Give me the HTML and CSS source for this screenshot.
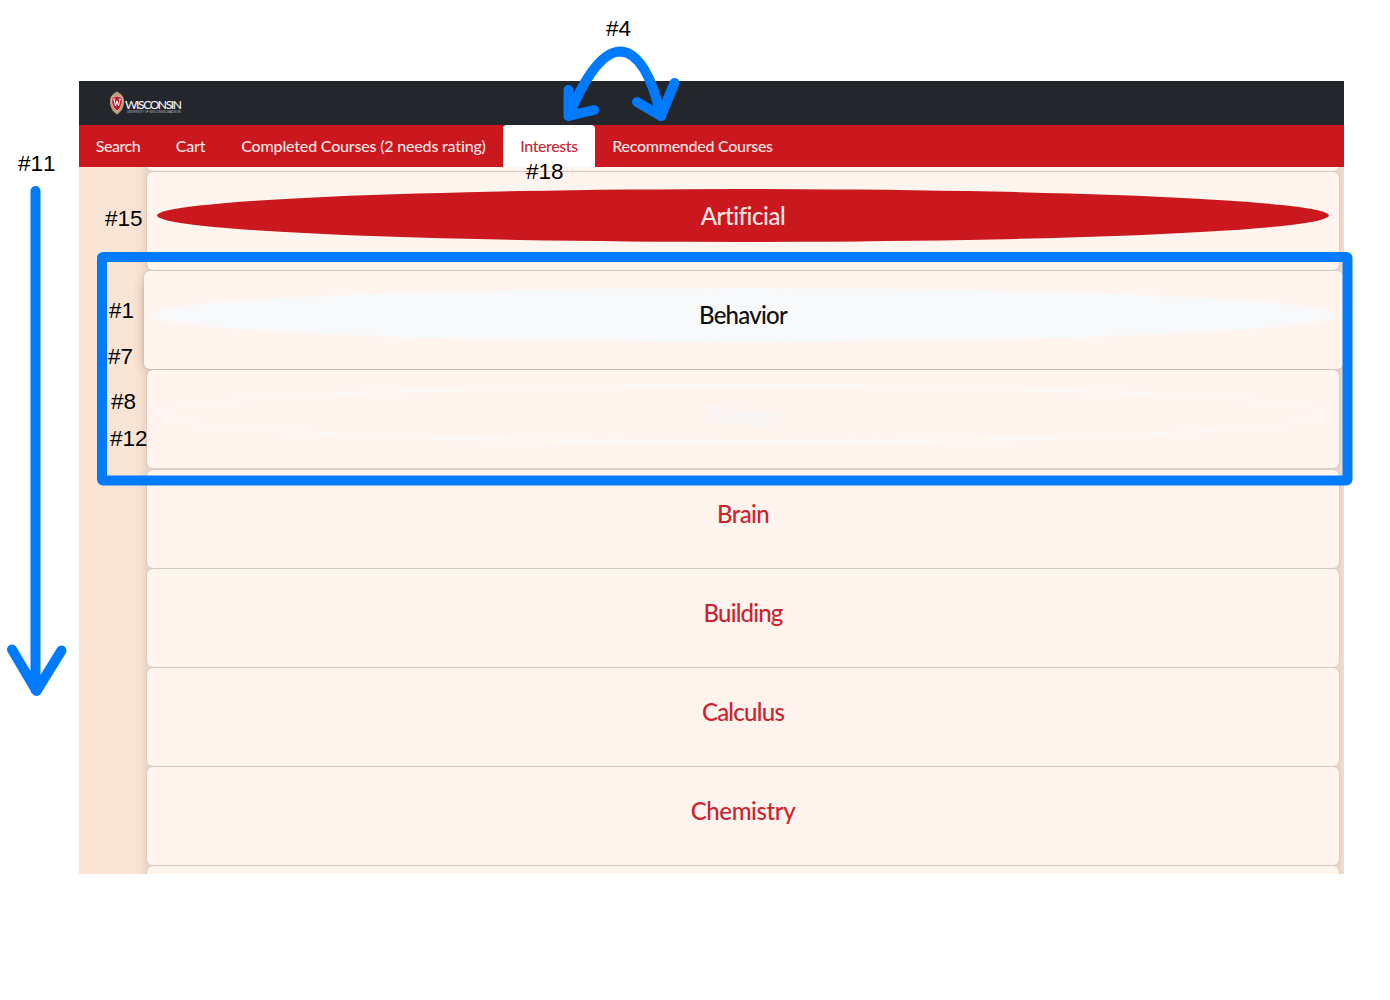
FILE: index.html
```html
<!DOCTYPE html>
<html lang="en">
<head>
<meta charset="utf-8">
<title>Interests</title>
<link rel="stylesheet" href="styles.css">
</head>
<body>
<main class="screen">
  <header class="topbar">
    <svg class="crest" viewBox="0 0 16 24" width="16" height="24">
      <path d="M8 .5 C10 2 15 4 15 10 C15 17 12 21 8 23.5 C4 21 1 17 1 10 C1 4 6 2 8 .5Z" fill="#bd9b79"/>
      <path d="M3 6.500 Q8 3.500 13 6.500 L13.200 12 Q12 17.500 8 20 Q4 17.500 2.800 12Z" fill="#c81c2d" stroke="#ead8ca" stroke-width=".7"/>
      <path d="M4 8.200H6.200M9.800 8.200H12M5 8.500L6.500 15L8 9.800L9.500 15L11 8.500" fill="none" stroke="#fff" stroke-width="1"/>
    </svg>
    <div class="brand">
      <span class="brand-name">WISCONSIN</span>
      <span class="brand-sub">UNIVERSITY OF WISCONSIN–MADISON</span>
    </div>
  </header>
  <nav class="tabs">
    <a class="tab tab-search">Search</a>
    <a class="tab tab-cart">Cart</a>
    <a class="tab tab-completed">Completed Courses (2 needs rating)</a>
    <a class="tab tab-interests">Interests</a>
    <a class="tab tab-recommended">Recommended Courses</a>
  </nav>
  <section class="list">
    <div class="card"></div>
    <div class="card"><div class="pill pill-selected"><span class="t-artificial">Artificial</span></div></div>
    <div class="card card-hover"><div class="pill pill-light"><span class="t-behavior">Behavior</span></div></div>
    <div class="card"><div class="pill pill-ghost"><span class="t-biology">Biology</span></div></div>
    <div class="card"><div class="pill"><span class="t-brain">Brain</span></div></div>
    <div class="card"><div class="pill"><span class="t-building">Building</span></div></div>
    <div class="card"><div class="pill"><span class="t-calculus">Calculus</span></div></div>
    <div class="card"><div class="pill"><span class="t-chemistry">Chemistry</span></div></div>
    <div class="card"></div>
  </section>
</main>
<svg class="marks" viewBox="0 0 1390 1000" width="1390" height="1000">
  <rect x="102" y="257" width="1245.5" height="223.5" rx="1"/>
  <path d="M35.5 191V690M12 649.5L36.5 691L61.500 650.5"/>
  <path d="M569 116C580 88 599 52 620 51.500C642 52 654 86 661 116"/>
  <path d="M568.500 90V116L594 110M637 102L661 116L674.500 83"/>
</svg>
<span class="note note-4">#4</span>
<span class="note note-11">#11</span>
<span class="note note-18">#18</span>
<span class="note note-15">#15</span>
<span class="note note-1">#1</span>
<span class="note note-7">#7</span>
<span class="note note-8">#8</span>
<span class="note note-12">#12</span>
</body>
</html>
```
FILE: styles.css
```css
* { box-sizing: border-box; }
body {
  margin: 0;
  padding: 81px 0 0 79px;
  width: 1390px;
  height: 1000px;
  position: relative;
  overflow: hidden;
  background: #fff;
  font-family: Lato, "Open Sans", sans-serif;
}
.screen {
  width: 1265px;
  height: 793.4px;
  overflow: hidden;
  background: #fae4d6;
  display: flex;
  flex-direction: column;
}
.topbar {
  flex: none;
  height: 44px;
  padding-left: 30px;
  display: flex;
  align-items: center;
  background: #23262b;
}
.brand { display: flex; flex-direction: column; padding-top: 6px; color: #f4f4f4; }
.brand-name { font: 500 12px/12px Lato, sans-serif; letter-spacing: -1.4px; white-space: nowrap; width: 57px; }
.brand-sub { font: 2.9px/3px "Liberation Sans", sans-serif; white-space: nowrap; color: #bbb; padding-left: 2px; letter-spacing: -.04px; }
.tabs { flex: none; height: 42px; display: flex; background: #cb171e; }
.tab {
  display: flex;
  justify-content: center;
  align-items: center;
  padding-bottom: 2px;
  color: #fbe3e1;
  font-size: 16px;
  font-weight: 500;
  letter-spacing: -.22px;
  white-space: nowrap;
}
.tab-search { width: 78px; letter-spacing: -.5px; }
.tab-cart { width: 67px; }
.tab-completed { width: 279px; letter-spacing: -.18px; }
.tab-interests { width: 92px; background: #fff; color: #c72a35; border-radius: 4px 4px 0 0; letter-spacing: -.4px; }
.tab-recommended { width: 195px; letter-spacing: -.27px; }
.list {
  flex: none;
  width: 1192px;
  margin: -94.2px 0 0 68px;
  display: grid;
  grid-auto-rows: 98px;
  row-gap: 1.2px;
  clip-path: inset(94.2px -80px 0 -80px);
  background: #e7d8cf;
  box-shadow: 0 0 12px rgba(100, 60, 40, .2);
}
.card {
  background: #fff5ee;
  border-radius: 6px;
  padding: 17px 10px 0;
  box-shadow: 0 0 2px rgba(90, 65, 55, .2);
}
.card-hover {
  margin: 0 -3.5px;
  padding: 16.5px 9px 0;
  box-shadow: 0 0 2px rgba(90, 65, 55, .22), -5px 4px 12px -5px rgba(100, 60, 40, .22);
}
.card-hover ~ .card { position: relative; }
.pill {
  height: 53px;
  border-radius: 50%;
  display: flex;
  align-items: center;
  justify-content: center;
  color: #cb2530;
  font-size: 24px;
  font-weight: 500;
}
.pill-selected { background: #cb171e; color: #fbe7e4; }
.pill-light { background: #f8f9fb; color: #111; height: 54px; }
.pill-ghost { height: 60px; margin-top: -3px; border: 4px solid #fcf6f5; color: #f6f5f8; font-weight: 700; }
.t-artificial { letter-spacing: -.45px; }
.t-behavior { letter-spacing: -.75px; }
.t-biology { letter-spacing: -1.4px; }
.t-brain { letter-spacing: -.65px; }
.t-building { letter-spacing: -.85px; }
.t-calculus { letter-spacing: -.75px; }
.t-chemistry { letter-spacing: -.4px; }
.marks { position: absolute; left: 0; top: 0; fill: none; stroke: #007aff; stroke-width: 10; stroke-linecap: round; stroke-linejoin: round; }
.note { position: absolute; font: 22.5px/26px "Liberation Sans", Arial, sans-serif; color: #000; }
.note-4 { left: 606px; top: 16px; }
.note-11 { left: 18px; top: 151px; font-kerning: none; }
.note-18 { left: 526px; top: 159px; }
.note-15 { left: 105px; top: 206px; }
.note-1 { left: 109px; top: 298px; }
.note-7 { left: 108px; top: 344px; }
.note-8 { left: 111px; top: 389px; }
.note-12 { left: 110px; top: 426px; }
```
